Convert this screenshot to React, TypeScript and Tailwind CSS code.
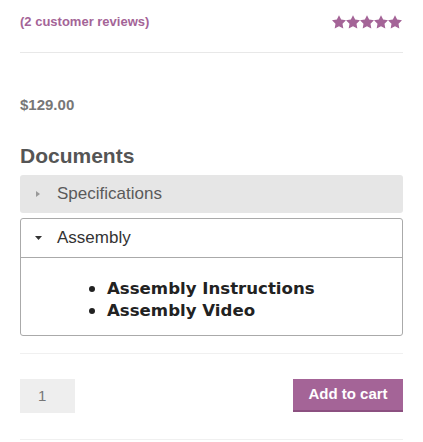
import React from 'react'

function Star() {
  return (
    <svg width="14" height="14" viewBox="2 2 20 19.5" className="block">
      <path
        d="M12 2l3.09 6.26L22 9.27l-5 4.87 1.18 6.88L12 17.77l-6.18 3.25L7 14.14 2 9.27l6.91-1.01L12 2z"
        fill="#a46497"
      />
    </svg>
  )
}

export default function App() {
  return (
    <main className="min-h-screen bg-white px-[20px] font-['Liberation_Sans',Arial,sans-serif]">
      <div className="flex items-center justify-between pt-[12px]">
        <a className="text-[13px] leading-[20px] font-bold text-[#a46497]">(2 customer reviews)</a>
        <div className="flex mr-[1px]">
          <Star />
          <Star />
          <Star />
          <Star />
          <Star />
        </div>
      </div>
      <div className="mt-[20px] border-b border-[#e8e8e8]" />

      <p className="mt-[42px] text-[15px] leading-[20px] font-bold text-[#777]">$129.00</p>

      <h2 className="mt-[28px] text-[21px] leading-[26px] font-bold text-[#555]">Documents</h2>

      <div className="mt-[6px] h-[38px] flex items-center rounded-[3px] bg-[#e6e6e6] pl-[16px]">
        <svg width="4" height="6" viewBox="0 0 4 6" className="block">
          <path d="M0 0L4 3L0 6z" fill="#999" />
        </svg>
        <span className="ml-[17px] text-[17px] text-[#5a5a5a]">Specifications</span>
      </div>

      <div className="mt-[5px] rounded-[3px] border border-[#aaa]">
        <div className="h-[39px] flex items-center border-b border-[#aaa] pl-[14px]">
          <svg width="7" height="4" viewBox="0 0 7 4" className="block">
            <path d="M0 0L7 0L3.5 4z" fill="#333" />
          </svg>
          <span className="ml-[15px] text-[17px] text-[#333]">Assembly</span>
        </div>
        <ul className="pt-[20px] pb-[13px] pl-[68px] font-['DejaVu_Sans',Verdana,sans-serif] text-[16.6px] leading-[22px] font-bold text-[#222]">
          <li className="flex items-center">
            <span className="w-[6px] h-[6px] rounded-full bg-[#222] mr-[12px]" />
            Assembly Instructions
          </li>
          <li className="flex items-center">
            <span className="w-[6px] h-[6px] rounded-full bg-[#222] mr-[12px]" />
            Assembly Video
          </li>
        </ul>
      </div>

      <div className="mt-[17px] border-b border-[#f0f0f0]" />

      <form className="mt-[25px] flex items-start justify-between">
        <div className="w-[55px] h-[34px] bg-[#eee] flex items-center pl-[18px] text-[15px] text-[#777]">1</div>
        <button
          type="button"
          className="w-[110px] h-[33px] bg-[#a46497] border-b-2 border-[#8c5080] text-white text-[15px] font-bold"
        >
          Add to cart
        </button>
      </form>

      <div className="mt-[26px] border-b border-[#f0f0f0]" />
    </main>
  )
}
